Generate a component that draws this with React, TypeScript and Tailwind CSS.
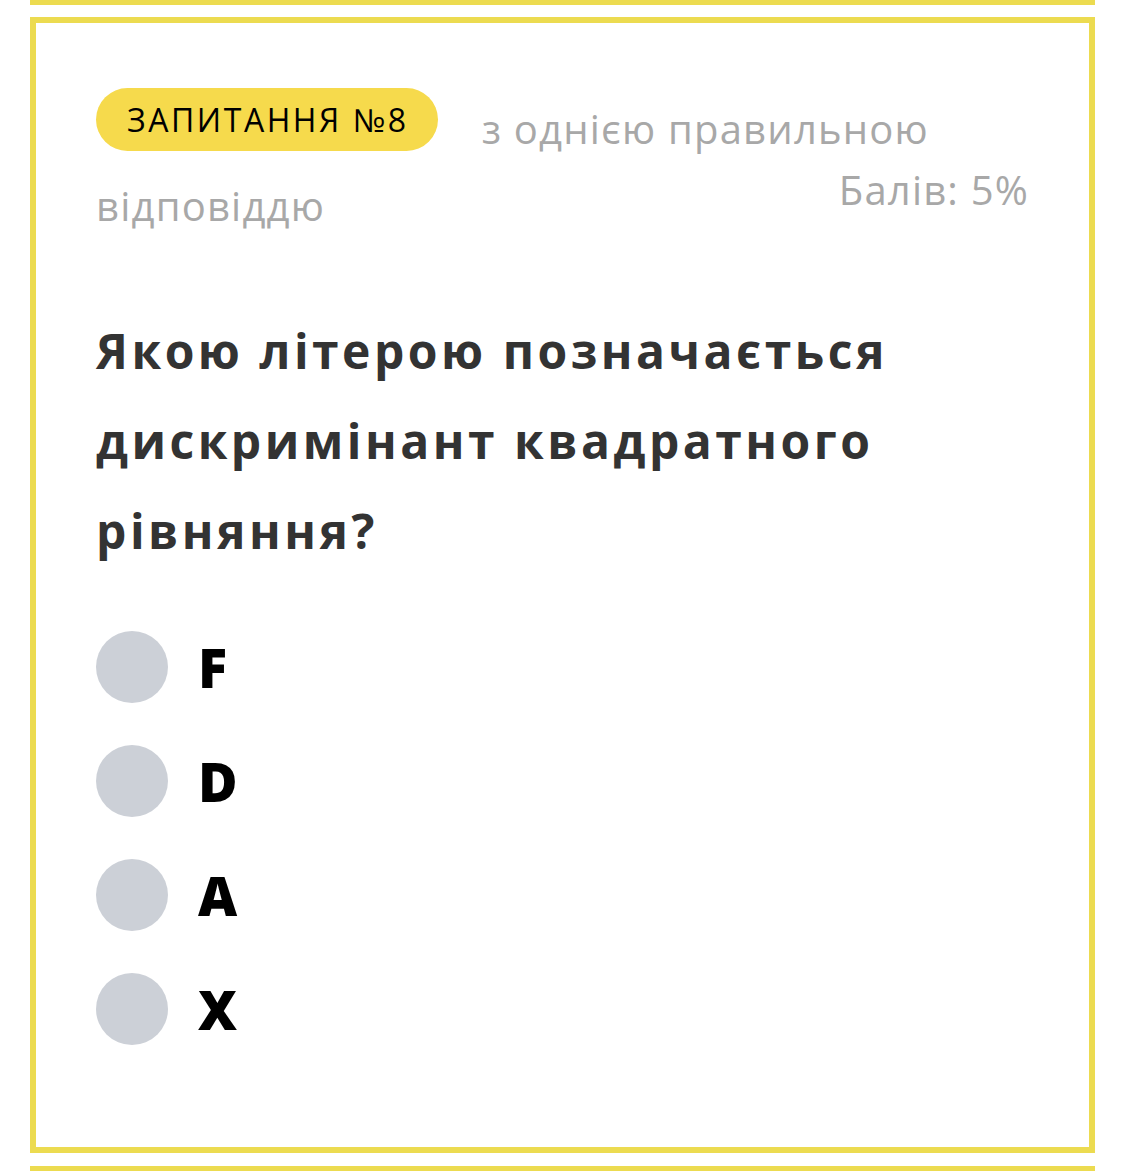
import React from "react";

const answers = ["F", "D", "A", "X"];

export default function App() {
  return (
    <div className="w-full min-h-screen bg-white overflow-hidden" style={{ fontFamily: '"Open Sans", "Noto Sans", sans-serif' }}>
      <div className="mx-[30px] h-[5px] bg-[#ecdb50]" />
      <div className="mx-[30px] mt-[12px] border-[6px] border-[#ecdb50] pl-[60px] pr-[60px] pt-[65px] pb-[102px]">
        {/* header */}
        <div className="flex items-start">
          <div className="h-[63px] rounded-full bg-[#f6da4c] pl-[31px] pr-[29px] flex items-center text-[32px] leading-none tracking-[0.08em] text-black whitespace-nowrap">
            ЗАПИТАННЯ №8
          </div>
          <span className="ml-[44px] mt-[17px] text-[40px] leading-[48px] tracking-[0.03em] text-[#a8a8a8] whitespace-nowrap">
            з однією правильною
          </span>
        </div>
        <div className="mt-[13px] flex items-start justify-between">
          <span className="mt-[16px] text-[40px] leading-[48px] tracking-[0.03em] text-[#a8a8a8]">відповіддю</span>
          <span className="text-[40px] leading-[48px] tracking-[0.03em] text-[#a8a8a8]">Балів: 5%</span>
        </div>

        {/* question */}
        <h2 className="mt-[76px] text-[48px] leading-[90px] font-bold tracking-[0.073em] text-[#333333]">
          Якою літерою позначається
          <br />
          дискримінант квадратного
          <br />
          рівняння?
        </h2>

        {/* answers */}
        <div className="mt-[55px] flex flex-col gap-[42px]">
          {answers.map((a) => (
            <label key={a} className="flex items-center gap-[30px]">
              <span className="w-[72px] h-[72px] rounded-full bg-[#ccd0d7] shrink-0" />
              <span className="text-[54px] leading-none font-extrabold text-black">{a}</span>
            </label>
          ))}
        </div>
      </div>
      <div className="mx-[30px] mt-[13px] h-[20px] border-t-[6px] border-x-[6px] border-[#ecdb50]" />
    </div>
  );
}
